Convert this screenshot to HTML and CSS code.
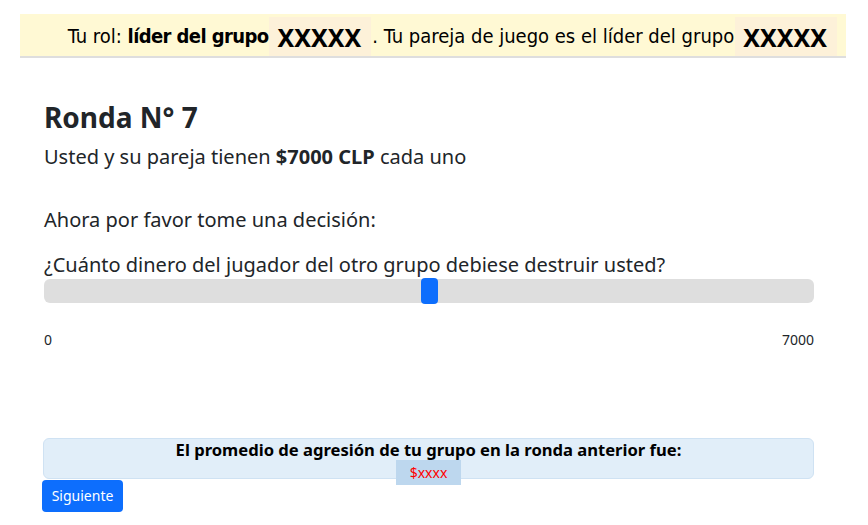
FILE: index.html
```html
<!DOCTYPE html>
<html lang="es">
<head>
<meta charset="utf-8">
<link rel="stylesheet" href="styles.css">
</head>
<body>
<div class="rolebar">
  <span class="roletext">Tu rol: <b>líder del grupo</b></span>
  <span class="code">XXXXX</span>
  <span class="roletext">. Tu pareja de juego es el líder del grupo</span>
  <span class="code">XXXXX</span>
</div>
<main class="content">
  <h3 class="title">Ronda N° 7</h3>
  <p class="lead">Usted y su pareja tienen <b>$7000 CLP</b> cada uno</p>
  <p class="ask">Ahora por favor tome una decisión:</p>
  <label class="question" for="amount">¿Cuánto dinero del jugador del otro grupo debiese destruir usted?</label>
  <input id="amount" class="range" type="range" min="0" max="7000" value="3500">
  <div class="ticks"><span>0</span><span>7000</span></div>
  <div class="alert">
    <div class="alert-title">El promedio de agresión de tu grupo en la ronda anterior fue:</div>
    <span class="amount">$xxxx</span>
  </div>
  <button class="btn">Siguiente</button>
</main>
</body>
</html>
```

FILE: styles.css
```css
html, body {
  margin: 0;
  padding: 0;
  background: #ffffff;
}
body {
  font-family: "Noto Sans", "Open Sans", sans-serif;
  color: #212529;
}
.rolebar {
  margin: 14px 22px 0 20px;
  height: 42px;
  background: #fff9d4;
  border-bottom: 2px solid #dedede;
  display: flex;
  align-items: stretch;
  justify-content: flex-end;
  padding-right: 8px;
}
.roletext {
  font-family: "DejaVu Sans Condensed", "DejaVu Sans", sans-serif;
  font-stretch: condensed;
  font-size: 20px;
  color: #000;
  display: flex;
  align-items: center;
  white-space: pre;
  padding-top: 2px;
}
.roletext b {
  font-weight: bold;
  letter-spacing: -0.6px;
}
.code {
  background: #fdf1d9;
  font-family: "Noto Sans", sans-serif;
  font-weight: 700;
  font-size: 25px;
  color: #000;
  display: flex;
  align-items: center;
  padding: 0 10px 0 8px;
  margin: 3px 1px 0 1px;
}
.content {
  padding: 0 54px 0 44px;
}
.title {
  margin: 43px 0 0;
  font-size: 28px;
  font-weight: 700;
  line-height: 1.2;
}
.lead {
  margin: 7px 0 0;
  font-size: 20px;
  line-height: 30px;
}
.ask {
  margin: 33px 0 0;
  font-size: 20px;
  line-height: 30px;
}
.question {
  display: block;
  margin-top: 15px;
  font-size: 20px;
  line-height: 30px;
}
.range {
  -webkit-appearance: none;
  appearance: none;
  display: block;
  width: 100%;
  height: 24px;
  margin: -1px 0 0;
  background: #dedede;
  border-radius: 6px;
  outline: none;
}
.range::-webkit-slider-thumb {
  -webkit-appearance: none;
  appearance: none;
  width: 17px;
  height: 26px;
  border-radius: 4px;
  background: #0d6efd;
  border: none;
}
.ticks {
  display: flex;
  justify-content: space-between;
  margin-top: 26px;
  font-size: 14px;
  line-height: 21px;
  color: #212529;
}
.alert {
  margin: 88px 0 0 -1px;
  height: 39px;
  background: #e1eef9;
  border: 1px solid #cfe2f3;
  border-radius: 6px;
  text-align: center;
}
.alert-title {
  font-weight: 700;
  font-size: 16.6px;
  line-height: 22px;
  color: #000;
}
.amount {
  display: inline-block;
  background: #bdd7ee;
  color: #ff0000;
  font-size: 14px;
  line-height: 25px;
  padding: 0 14px;
  margin-top: -3px;
}
.btn {
  display: block;
  margin-left: -2px;
  margin-top: 1px;
  width: 81px;
  height: 32px;
  background: #0d6efd;
  color: #fff;
  border: none;
  border-radius: 4px;
  font-family: "Noto Sans", sans-serif;
  font-size: 14px;
  padding: 0;
}
```
